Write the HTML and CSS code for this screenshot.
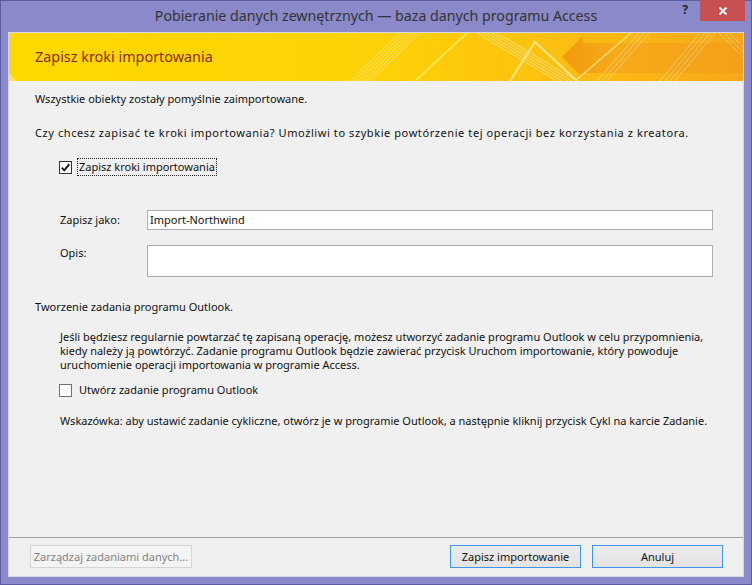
FILE: index.html
```html
<!DOCTYPE html>
<html lang="pl">
<head>
<meta charset="utf-8">
<title>Pobieranie danych zewnętrznych</title>
<link rel="stylesheet" href="styles.css">
</head>
<body>
<div class="window">
  <div class="titlebar">
    <div></div>
    <div class="title">Pobieranie danych zewnętrznych — baza danych programu Access</div>
    <div class="controls">
      <span class="help">?</span>
      <span class="close"><svg width="10" height="10" viewBox="0 0 10 10"><path d="M1.5 1.5 L8.5 8.5 M8.5 1.5 L1.5 8.5" stroke="#fff" stroke-width="1.8" fill="none"/></svg></span>
    </div>
  </div>
  <div class="panel">
    <div class="banner">
      <svg class="banner-art" width="734" height="48" viewBox="0 0 734 48" preserveAspectRatio="none">
        <defs>
          <linearGradient id="bg" x1="0" y1="0" x2="1" y2="0">
            <stop offset="0" stop-color="#ffd800"/>
            <stop offset="0.5" stop-color="#fed206"/>
            <stop offset="0.72" stop-color="#fcc20f"/>
            <stop offset="1" stop-color="#f7a81a"/>
          </linearGradient>
          <linearGradient id="arrow" x1="0" y1="0" x2="1" y2="0">
            <stop offset="0" stop-color="#f2960f"/>
            <stop offset="0.3" stop-color="#f6a81a"/>
            <stop offset="1" stop-color="#f49e18"/>
          </linearGradient>
        </defs>
        <rect x="0" y="0" width="734" height="48" fill="url(#bg)"/>
        <polygon points="0,40 8,48 0,48" fill="#ffe56a" opacity="0.7"/>
        <polygon points="553,24 574,3 574,10 734,10 734,40 574,40 574,45" fill="url(#arrow)" opacity="0.9"/>
        <g stroke="#fff" stroke-width="1" opacity="0.45">
          <line x1="341" y1="48" x2="391" y2="0"/>
          <line x1="345" y1="48" x2="395" y2="0"/>
          <line x1="349" y1="48" x2="399" y2="0"/>
          <line x1="353" y1="48" x2="403" y2="0"/>
          <line x1="357" y1="48" x2="407" y2="0"/>
          <line x1="361" y1="48" x2="411" y2="0"/>
        </g>
        <line x1="406" y1="48" x2="458" y2="0" stroke="#ffea50" stroke-width="2" opacity="0.9"/>
        <g stroke="#fff" stroke-width="1" opacity="0.45">
          <line x1="468" y1="0" x2="548" y2="48"/>
          <line x1="473" y1="0" x2="553" y2="48"/>
          <line x1="478" y1="0" x2="558" y2="48"/>
          <line x1="483" y1="0" x2="563" y2="48"/>
          <line x1="488" y1="0" x2="568" y2="48"/>
        </g>
        <polyline points="501,48 526,9 568,48" fill="none" stroke="#ffe890" stroke-width="2.2" opacity="0.9"/>
        <line x1="566" y1="48" x2="622" y2="0" stroke="#ffe27a" stroke-width="1.6" opacity="0.9"/>
        <g stroke="#fff" stroke-width="1" opacity="0.4">
          <line x1="588" y1="48" x2="630" y2="0"/>
          <line x1="593" y1="48" x2="635" y2="0"/>
          <line x1="598" y1="48" x2="640" y2="0"/>
          <line x1="651" y1="48" x2="691" y2="0"/>
          <line x1="656" y1="48" x2="696" y2="0"/>
          <line x1="661" y1="48" x2="701" y2="0"/>
          <line x1="666" y1="48" x2="706" y2="0"/>
          <line x1="710" y1="0" x2="734" y2="24"/>
          <line x1="715" y1="0" x2="734" y2="19"/>
          <line x1="720" y1="0" x2="734" y2="14"/>
        </g>
      </svg>
      <h1 class="banner-title">Zapisz kroki importowania</h1>
    </div>
    <div class="content">
      <p class="line l-first">Wszystkie obiekty zostały pomyślnie zaimportowane.</p>
      <p class="line l-question">Czy chcesz zapisać te kroki importowania? Umożliwi to szybkie powtórzenie tej operacji bez korzystania z kreatora.</p>
      <div class="check-row check-save">
        <span class="cb cb-checked"><svg width="11" height="11" viewBox="0 0 11 11"><path d="M1.8 5.6 L4.3 8.3 L9.3 2.2" stroke="#1a1a1a" stroke-width="1.9" fill="none"/></svg></span>
        <span class="focus-label">Zapisz kroki importowania</span>
      </div>
      <div class="field field-name">
        <span class="field-label">Zapisz jako:</span>
        <div class="input">Import-Northwind</div>
      </div>
      <div class="field field-desc">
        <span class="field-label">Opis:</span>
        <div class="textarea"></div>
      </div>
      <p class="line l-outlook">Tworzenie zadania programu Outlook.</p>
      <p class="para">Jeśli będziesz regularnie powtarzać tę zapisaną operację, możesz utworzyć zadanie programu Outlook w celu przypomnienia,<br>kiedy należy ją powtórzyć. Zadanie programu Outlook będzie zawierać przycisk Uruchom importowanie, który powoduje<br>uruchomienie operacji importowania w programie Access.</p>
      <div class="check-row check-task">
        <span class="cb"></span>
        <span class="plain-label">Utwórz zadanie programu Outlook</span>
      </div>
      <p class="line l-tip">Wskazówka: aby ustawić zadanie cykliczne, otwórz je w programie Outlook, a następnie kliknij przycisk Cykl na karcie Zadanie.</p>
    </div>
    <div class="footer">
      <button class="btn btn-disabled" disabled>Zarządzaj zadaniami danych...</button>
      <div class="footer-right">
        <button class="btn btn-main">Zapisz importowanie</button>
        <button class="btn btn-main">Anuluj</button>
      </div>
    </div>
  </div>
</div>
</body>
</html>
```
FILE: styles.css
```css
* { box-sizing: border-box; }
html, body { margin: 0; padding: 0; }
body {
  width: 752px;
  height: 585px;
  overflow: hidden;
  font-family: "Noto Sans", "Segoe UI", sans-serif;
  font-size: 11px;
  color: #111;
}
.window {
  width: 752px;
  height: 585px;
  border: 1px solid #5d5c9e;
  background: #8a89c9;
  display: flex;
  flex-direction: column;
}
.titlebar {
  height: 31px;
  flex: none;
  display: grid;
  grid-template-columns: 1fr auto 1fr;
  align-items: start;
}
.title {
  font-size: 14.2px;
  color: #333;
  line-height: 18px;
  padding-top: 6px;
  white-space: nowrap;
}
.controls {
  display: flex;
  justify-content: flex-end;
  align-items: flex-start;
  margin-right: 6px;
}
.help {
  font-size: 12px;
  font-weight: bold;
  color: #222;
  line-height: 14px;
  padding-top: 2px;
  margin-right: 12px;
}
.close {
  width: 45px;
  height: 21px;
  margin-top: -1px;
  background: #c75050;
  display: flex;
  align-items: center;
  justify-content: center;
}
.close svg { display: block; }
.panel {
  flex: 1;
  margin: 0 7px 7px 7px;
  background: #f0f0f0;
  border: 1px solid #d6d6ec;
  display: flex;
  flex-direction: column;
}
.banner {
  height: 48px;
  flex: none;
  position: relative;
  overflow: hidden;
}
.banner-art {
  position: absolute;
  left: 0;
  top: 0;
  display: block;
}
.banner-title {
  position: relative;
  margin: 0;
  padding-left: 26px;
  font-weight: normal;
  font-size: 14.4px;
  line-height: 48px;
  color: #8a2c08;
}
.content {
  flex: 1;
  padding-left: 26px;
}
.line {
  margin: 0;
  line-height: 16px;
  white-space: nowrap;
}
.l-first { margin-top: 10px; }
.l-question { margin-top: 18px; letter-spacing: 0.58px; }
.check-row {
  display: flex;
  align-items: center;
  padding-left: 24px;
}
.check-save { margin-top: 17px; height: 18px; }
.check-task { margin-top: 10px; height: 16px; }
.cb {
  width: 13px;
  height: 13px;
  border: 1px solid #707070;
  background: #fff;
  display: flex;
  align-items: center;
  justify-content: center;
  flex: none;
}
.cb-checked { border-color: #333; }
.cb svg { display: block; }
.focus-label {
  margin-left: 5px;
  border: 1px dotted #222;
  padding: 0 1px;
  line-height: 16px;
}
.plain-label {
  margin-left: 7px;
  line-height: 16px;
}
.field {
  display: flex;
  align-items: flex-start;
  padding-left: 25px;
}
.field-label {
  width: 87px;
  flex: none;
  line-height: 16px;
}
.field-name { margin-top: 34px; align-items: center; }
.field-desc { margin-top: 15px; }
.input {
  width: 566px;
  height: 20px;
  border: 1px solid #abadb3;
  background: #fff;
  line-height: 18px;
  padding-left: 2px;
}
.textarea {
  width: 566px;
  height: 32px;
  border: 1px solid #abadb3;
  background: #fff;
}
.l-outlook { margin-top: 22px; }
.para {
  margin: 15px 0 0 0;
  padding-left: 25px;
  line-height: 14px;
  white-space: nowrap;
}
.l-tip { margin-top: 15px; padding-left: 25px; }
.footer {
  flex: none;
  border-top: 1px solid #a0a0a0;
  padding: 7px 20px 8px 21px;
  display: flex;
  justify-content: space-between;
}
.footer-right {
  display: flex;
  gap: 11px;
}
.btn {
  height: 23px;
  font-family: inherit;
  font-size: 11px;
  padding: 0;
  margin: 0;
}
.btn-disabled {
  width: 162px;
  background: #f4f4f4;
  border: 1px solid #d5d5d5;
  color: #838383;
}
.btn-main {
  width: 131px;
  background: linear-gradient(#ececec, #e3e3e3);
  border: 1px solid #3c96ec;
  color: #111;
}
```
